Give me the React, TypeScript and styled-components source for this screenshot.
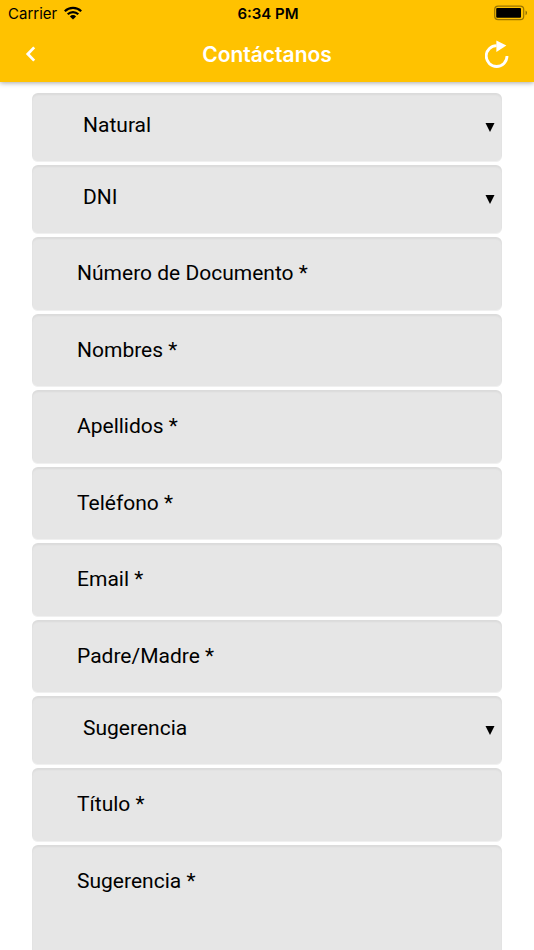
import styled, { createGlobalStyle, css } from "styled-components"

type Field =
  | { kind: "select"; name: string; label: string; options: string[] }
  | { kind: "input"; name: string; label: string; type?: string }
  | { kind: "textarea"; name: string; label: string }

const fields: Field[] = [
  {
    kind: "select",
    name: "personType",
    label: "Tipo de persona",
    options: ["Natural", "Jurídica"],
  },
  {
    kind: "select",
    name: "documentType",
    label: "Tipo de documento",
    options: ["DNI", "Pasaporte"],
  },
  { kind: "input", name: "documentNumber", label: "Número de Documento *" },
  { kind: "input", name: "firstName", label: "Nombres *" },
  { kind: "input", name: "lastName", label: "Apellidos *" },
  { kind: "input", name: "phone", label: "Teléfono *", type: "tel" },
  { kind: "input", name: "email", label: "Email *", type: "email" },
  { kind: "input", name: "parent", label: "Padre/Madre *" },
  {
    kind: "select",
    name: "requestType",
    label: "Tipo de solicitud",
    options: ["Sugerencia", "Reclamo"],
  },
  { kind: "input", name: "title", label: "Título *" },
  { kind: "textarea", name: "message", label: "Sugerencia *" },
]

function WifiIcon() {
  return (
    <svg width="18" height="14" viewBox="0 0 18 14" aria-hidden="true">
      <g fill="none" stroke="#000" strokeWidth="2.2">
        <path d="M0.8 5.2a11.6 11.6 0 0 1 16.4 0" />
        <path d="M3.7 8.3a7.5 7.5 0 0 1 10.6 0" />
      </g>
      <path d="M9 13.4 5.9 10.4a4.4 4.4 0 0 1 6.2 0z" fill="#000" />
    </svg>
  )
}

function BatteryIcon() {
  return (
    <svg width="34" height="16" viewBox="0 0 34 16" aria-hidden="true">
      <rect
        x="0.7"
        y="1.2"
        width="29"
        height="13.4"
        rx="3.4"
        fill="none"
        stroke="#000"
        strokeOpacity="0.4"
        strokeWidth="1.2"
      />
      <rect x="2.2" y="3" width="24.8" height="9.8" rx="1" fill="#000" />
      <path d="M31.6 5.6c1.8 0.8 1.8 3.8 0 4.6z" fill="#000" fillOpacity="0.5" />
    </svg>
  )
}

function BackIcon() {
  return (
    <svg width="11" height="16" viewBox="0 0 11 16" aria-hidden="true">
      <path
        d="M9.2 1.4 2.8 8l6.4 6.6"
        fill="none"
        stroke="#fff"
        strokeWidth="2.8"
      />
    </svg>
  )
}

function RefreshIcon() {
  return (
    <svg width="24" height="28" viewBox="0 0 24 28" aria-hidden="true">
      <path
        d="M22 16.1a10.4 10.4 0 1 1-10.4-10.4"
        fill="none"
        stroke="#fff"
        strokeWidth="2.8"
      />
      <path d="M11.4 0.4v11.6l10-6.6z" fill="#fff" />
    </svg>
  )
}

function FormField({ field }: { field: Field }) {
  if (field.kind === "select") {
    return (
      <SelectWrap>
        <Select name={field.name} aria-label={field.label}>
          {field.options.map((option) => (
            <option key={option}>{option}</option>
          ))}
        </Select>
        <Arrow viewBox="0 0 10 9" aria-hidden="true">
          <path d="M0.5 0h9L5 9z" />
        </Arrow>
      </SelectWrap>
    )
  }
  if (field.kind === "textarea") {
    return (
      <TextArea
        name={field.name}
        rows={4}
        placeholder={field.label}
        aria-label={field.label}
      />
    )
  }
  return (
    <Input
      name={field.name}
      type={field.type ?? "text"}
      placeholder={field.label}
      aria-label={field.label}
    />
  )
}

function App() {
  return (
    <>
      <GlobalStyle />
      <Header>
        <StatusBar>
          <Carrier>
            Carrier <WifiIcon />
          </Carrier>
          <Time>6:34 PM</Time>
          <Battery>
            <BatteryIcon />
          </Battery>
        </StatusBar>
        <NavBar>
          <NavButton type="button" aria-label="Volver">
            <BackIcon />
          </NavButton>
          <Title>Contáctanos</Title>
          <NavButton type="button" aria-label="Actualizar" $end>
            <RefreshIcon />
          </NavButton>
        </NavBar>
      </Header>
      <Form>
        {fields.map((field) => (
          <FormField key={field.name} field={field} />
        ))}
      </Form>
    </>
  )
}

const GlobalStyle = createGlobalStyle`
  * {
    box-sizing: border-box;
  }
  html {
    scrollbar-width: none;
  }
  body {
    margin: 0;
    background-color: #fff;
    font-family: Roboto, "Liberation Sans", sans-serif;
  }
`

const Header = styled.header`
  background-color: #ffc200;
  box-shadow: 0 1px 5px rgba(0, 0, 0, 0.35);
  font-family: Inter, "Liberation Sans", sans-serif;
`

const StatusBar = styled.div`
  display: grid;
  grid-template-columns: 1fr auto 1fr;
  align-items: center;
  height: 26px;
  padding: 0 6px 0 8px;
  font-size: 15px;
`

const Carrier = styled.span`
  display: flex;
  align-items: center;
  gap: 7px;
`

const Time = styled.span`
  font-weight: 600;
`

const Battery = styled.span`
  display: flex;
  justify-content: flex-end;
`

const NavBar = styled.div`
  display: grid;
  grid-template-columns: 1fr auto 1fr;
  align-items: center;
  height: 56px;
  padding: 0 25px;
`

const NavButton = styled.button<{ $end?: boolean }>`
  display: flex;
  justify-self: ${({ $end }) => ($end ? "end" : "start")};
  padding: 0;
  border: 0;
  background: none;
  cursor: pointer;
`

const Title = styled.h1`
  margin: 0;
  font-size: 21px;
  font-weight: 600;
  color: #fff;
`

const Form = styled.form`
  display: flex;
  flex-direction: column;
  gap: 3px;
  margin: 11px 6%;
`

const fieldStyle = css`
  width: 100%;
  margin: 0;
  border: 0;
  border-radius: 6px;
  outline: none;
  background-color: #e6e6e6;
  box-shadow:
    inset 0 2px 2px rgba(0, 0, 0, 0.05),
    inset 0 -1px 0 rgba(255, 255, 255, 0.4);
  font-family: inherit;
  font-size: 21px;
  line-height: 1.5;
  color: #000;

  &::placeholder {
    color: #000;
    opacity: 1;
  }
`

const Input = styled.input`
  ${fieldStyle}
  padding: 21px 45px;
`

const TextArea = styled.textarea`
  ${fieldStyle}
  display: block;
  padding: 21px 45px;
  resize: none;
`

const SelectWrap = styled.div`
  display: grid;
  align-items: center;

  > * {
    grid-area: 1 / 1;
  }
`

const Select = styled.select`
  ${fieldStyle}
  height: 69px;
  padding: 0 45px 4px 51px;
  appearance: none;
`

const Arrow = styled.svg`
  justify-self: end;
  width: 10px;
  height: 9px;
  margin-right: 7px;
  pointer-events: none;
`

export default App
